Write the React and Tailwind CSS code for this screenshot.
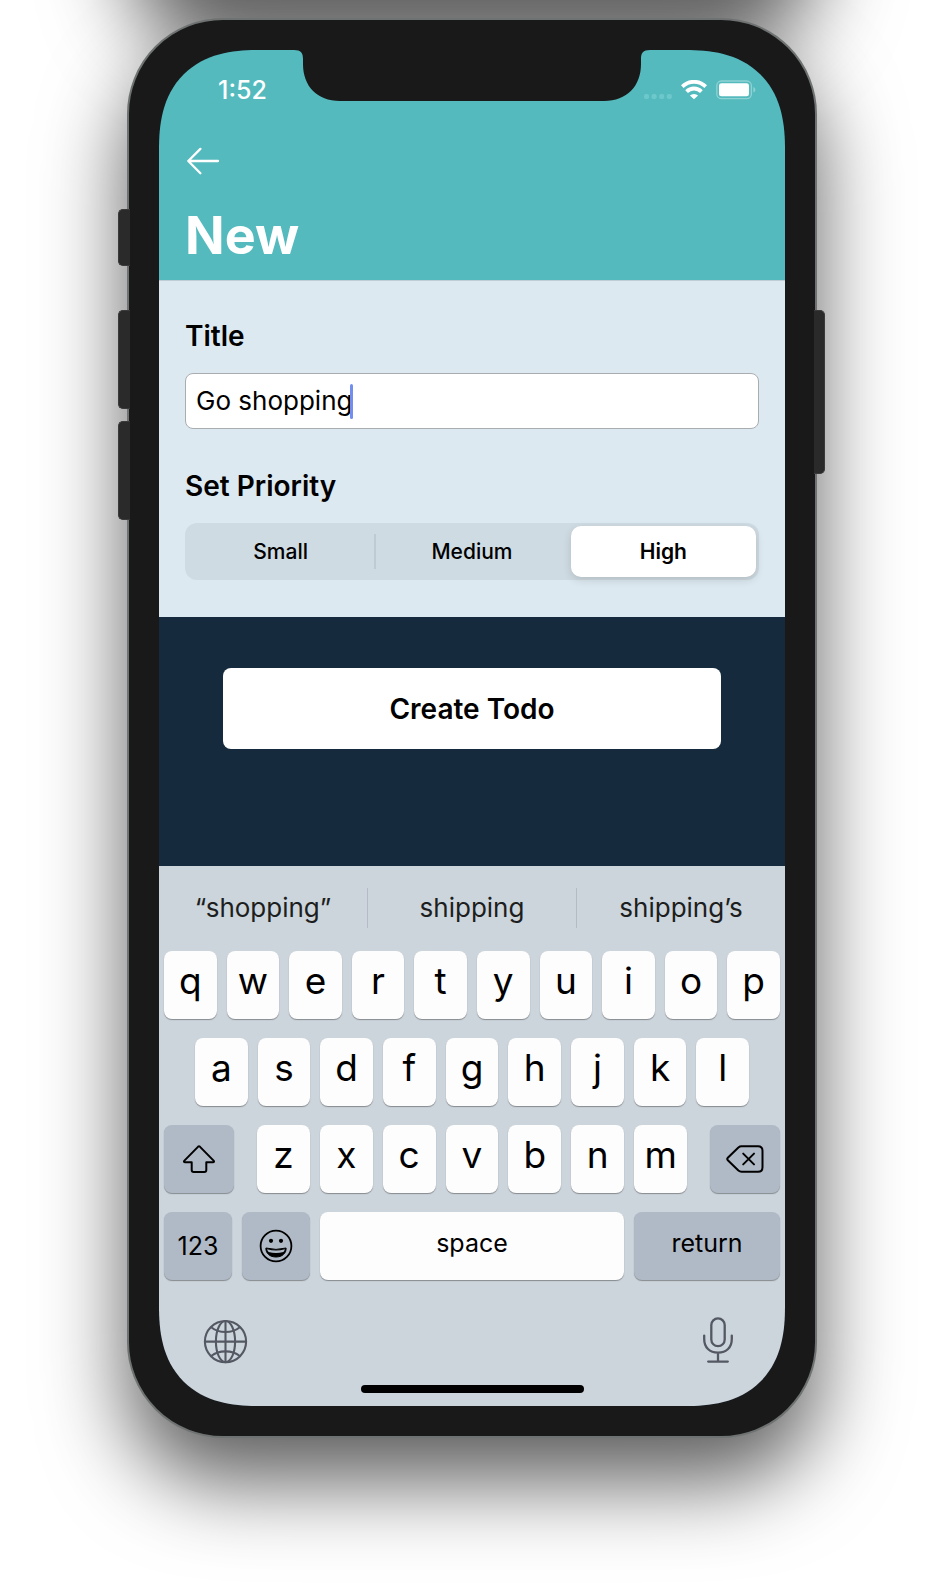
import React, { useState } from "react";

function StatusBar() {
  return (
    <div className="flex h-[80px] items-center justify-between pl-[59px] pr-[29px] text-white">
      <time className="text-[25px] leading-[30px] font-medium">1:52</time>
      <div className="flex items-center gap-[9px]">
        <svg width="28" height="20" viewBox="0 0 28 20" fill="#6cc8ca" aria-hidden="true">
          <rect x="0" y="14" width="5" height="5" rx="1.8" />
          <rect x="7.6" y="14" width="5" height="5" rx="1.8" />
          <rect x="15.2" y="14" width="5" height="5" rx="1.8" />
          <rect x="22.8" y="14" width="5" height="5" rx="1.8" />
        </svg>
        <svg width="26" height="20" viewBox="0 0 26 20" aria-label="Wi-Fi">
          <g fill="none" stroke="#fff" strokeWidth="3.8">
            <path d="M1.3 6.6 A16.6 16.6 0 0 1 24.7 6.6" />
            <path d="M5.6 11.6 A10.4 10.4 0 0 1 20.4 11.6" />
          </g>
          <path d="M13 19.3 L8.9 15.6 A5.8 5.8 0 0 1 17.1 15.6 Z" fill="#fff" />
        </svg>
        <svg width="40" height="20" viewBox="0 0 40 20" aria-label="Battery full">
          <rect x="0.8" y="1" width="34.6" height="17.6" rx="4.6" fill="none" stroke="#8fd2d4" strokeWidth="1.3" />
          <rect x="3" y="3.3" width="30" height="13" rx="2.4" fill="#fff" />
          <path d="M37.4 7 C40 8.2 40 11.4 37.4 12.6 Z" fill="#8fd2d4" />
        </svg>
      </div>
    </div>
  );
}

function Segment({ label, value, onChange, divider }) {
  const checked = value === label;
  return (
    <div className="relative flex h-[57px] items-center p-[3px]">
      <label
        className={
          checked
            ? "flex h-[51px] flex-1 cursor-pointer items-center justify-center rounded-[10px] bg-white text-[21px] leading-[26px] font-semibold shadow-[0_3px_8px_rgba(0,0,0,0.14)]"
            : "flex h-[51px] flex-1 cursor-pointer items-center justify-center rounded-[10px] text-[21px] leading-[26px] font-[450]"
        }
      >
        <input
          type="radio"
          name="priority"
          value={label}
          checked={checked}
          onChange={() => onChange(label)}
          className="sr-only"
        />
        {label}
      </label>
      {divider && <span className="absolute right-0 top-[11px] h-[35px] w-[2px] bg-[#bfcbd2]" />}
    </div>
  );
}

function LetterKey({ children }) {
  return (
    <button
      type="button"
      className="flex h-[68px] min-w-0 flex-1 items-center justify-center rounded-[8px] bg-[#fdfdfd] pb-[8px] text-[37px] leading-[46px] font-normal shadow-[0_1px_1px_#878b8f]"
    >
      {children}
    </button>
  );
}

const GREY_KEY =
  "flex h-[68px] items-center justify-center rounded-[8px] bg-[#b0bac7] text-[25px] leading-[30px] shadow-[0_1px_1px_#878b8f]";

function Keyboard() {
  return (
    <section aria-label="Keyboard" className="flex flex-col bg-[#ccd4dc] text-black">
      <div className="flex h-[85px] items-center pb-[2px] text-[26px] leading-[32px] text-[#1c1e20]">
        <button type="button" className="h-[40px] flex-1">“shopping”</button>
        <span className="h-[40px] w-px bg-[#b4bbc4]" />
        <button type="button" className="h-[40px] flex-1">shipping</button>
        <span className="h-[40px] w-px bg-[#b4bbc4]" />
        <button type="button" className="h-[40px] flex-1">shipping’s</button>
      </div>
      <div className="flex flex-col gap-[19px] px-[5px]">
        <div className="flex gap-[10px]">
          {"qwertyuiop".split("").map((k) => (
            <LetterKey key={k}>{k}</LetterKey>
          ))}
        </div>
        <div className="flex gap-[10px] px-[31px]">
          {"asdfghjkl".split("").map((k) => (
            <LetterKey key={k}>{k}</LetterKey>
          ))}
        </div>
        <div className="flex gap-[23px]">
          <button type="button" aria-label="Shift" className={GREY_KEY + " w-[70px]"}>
            <svg width="32" height="28" viewBox="0 0 32 28" fill="none" stroke="#000" strokeWidth="2" strokeLinejoin="round">
              <path d="M15.2 1.6 Q16 0.9 16.8 1.6 L30.6 15.6 Q31.7 17 29.8 17.2 H23.3 V25 Q23.3 27 21.3 27 H10.7 Q8.7 27 8.7 25 V17.2 H2.2 Q0.3 17 1.4 15.6 Z" />
            </svg>
          </button>
          <div className="flex flex-1 gap-[10px]">
            {"zxcvbnm".split("").map((k) => (
              <LetterKey key={k}>{k}</LetterKey>
            ))}
          </div>
          <button type="button" aria-label="Delete" className={GREY_KEY + " w-[70px]"}>
            <svg width="38" height="28" viewBox="0 0 38 28" fill="none" stroke="#000" strokeWidth="2" strokeLinejoin="round" strokeLinecap="round">
              <path d="M15.5 1.3 H32 Q36.5 1.3 36.5 5.8 V22.2 Q36.5 26.7 32 26.7 H15.5 Q13.8 26.7 12.4 25.5 L1.8 15.2 Q0.6 14 1.8 12.8 L12.4 2.5 Q13.8 1.3 15.5 1.3 Z" />
              <path d="M17.2 8.6 L28 19.4 M28 8.6 L17.2 19.4" />
            </svg>
          </button>
        </div>
        <div className="flex gap-[10px]">
          <button type="button" className={GREY_KEY + " w-[68px]"}>123</button>
          <button type="button" aria-label="Emoji" className={GREY_KEY + " w-[68px]"}>
            <svg width="34" height="34" viewBox="0 0 34 34">
              <circle cx="17" cy="17" r="15.4" fill="none" stroke="#000" strokeWidth="1.8" />
              <circle cx="12" cy="11.8" r="2.1" />
              <circle cx="22" cy="11.8" r="2.1" />
              <path
                d="M6.9 19 Q17 21.8 27.1 19 C27.4 24.6 22.8 28 17 28 C11.2 28 6.6 24.6 6.9 19 Z"
                stroke="#000"
                strokeWidth="1"
                strokeLinejoin="round"
              />
              <path d="M8.1 20.2 Q17 22.6 25.9 20.2 Q25.5 22 24.4 22.9 Q17 25.2 9.6 22.9 Q8.5 22 8.1 20.2 Z" fill="#b0bac7" />
            </svg>
          </button>
          <button
            type="button"
            className="flex h-[68px] flex-1 items-center justify-center rounded-[8px] bg-[#fdfdfd] pb-[6px] text-[25px] leading-[30px] shadow-[0_1px_1px_#878b8f]"
          >
            space
          </button>
          <button type="button" className={GREY_KEY + " w-[146px] pb-[6px]"}>return</button>
        </div>
      </div>
      <div className="flex items-center justify-between px-[44px] pt-[36px]">
        <button type="button" aria-label="Next keyboard">
          <svg className="block" width="45" height="48" viewBox="0 0 45 48" fill="none" stroke="#545862" strokeWidth="2.1">
            <circle cx="22.5" cy="25.6" r="20.6" />
            <ellipse cx="22.5" cy="25.6" rx="9.6" ry="20.6" />
            <path d="M22.5 5 V46.2 M1.9 25.6 H43.1" />
            <path d="M8.2 11.2 Q14 16 22.5 16 T36.8 11.2 M8.2 40 Q14 35.4 22.5 35.4 T36.8 40" />
          </svg>
        </button>
        <button type="button" aria-label="Dictate">
          <svg className="block" width="46" height="48" viewBox="0 0 46 48" fill="none" stroke="#545862" strokeWidth="2.3" strokeLinecap="round">
            <rect x="16.3" y="2.4" width="13.4" height="27.8" rx="6.7" />
            <path d="M9.2 19.6 V23 C9.2 31.6 14.6 36.6 23 36.6 C31.4 36.6 36.8 31.6 36.8 23 V19.6 M23 36.6 V45.4 M13.2 45.6 H32.8" />
          </svg>
        </button>
      </div>
      <div className="flex h-[42px] items-center justify-center pt-[8px]">
        <span className="h-[8px] w-[223px] rounded-full bg-black" />
      </div>
    </section>
  );
}

export default function App() {
  const [title, setTitle] = useState("Go shopping");
  const [priority, setPriority] = useState("High");

  return (
    <div className="relative flex min-h-screen flex-col items-center overflow-hidden bg-white px-[12px] pt-[18px] pb-[149px] font-[Inter,sans-serif] text-black">
      <div
        aria-hidden="true"
        className="absolute -top-[400px] h-[400px] w-full max-w-[690px] rounded-[96px] shadow-[0_50px_84px_rgba(0,0,0,0.63)]"
      />
      <div className="relative w-full max-w-[690px] rounded-[96px] border-2 border-[#6f7272] bg-[#191919] p-[30px] shadow-[0_44px_84px_rgba(0,0,0,0.63)]">
        <span className="absolute -left-[11px] top-[189px] h-[57px] w-[12px] rounded-l-[5px] border border-r-0 border-[#3a3a3a] bg-[#2a2a2a]" />
        <span className="absolute -left-[11px] top-[290px] h-[99px] w-[12px] rounded-l-[5px] border border-r-0 border-[#3a3a3a] bg-[#2a2a2a]" />
        <span className="absolute -left-[11px] top-[401px] h-[99px] w-[12px] rounded-l-[5px] border border-r-0 border-[#3a3a3a] bg-[#2a2a2a]" />
        <span className="absolute -right-[10px] top-[290px] h-[164px] w-[11px] rounded-r-[5px] border border-l-0 border-[#3a3a3a] bg-[#2a2a2a]" />

        <main className="relative flex flex-col overflow-hidden rounded-[84px] bg-[#152b3d] supports-[corner-shape:squircle]:rounded-[100px] supports-[corner-shape:squircle]:[corner-shape:superellipse(1.3)]">
          <svg
            className="absolute left-1/2 top-0 -translate-x-1/2"
            width="356"
            height="51"
            viewBox="0 0 356 51"
            fill="#191919"
            aria-hidden="true"
          >
            <path d="M0 0 C7 0 9 3 9 9 V14 C9 36 23 51 46 51 H310 C333 51 347 36 347 14 V9 C347 3 349 0 356 0 Z" />
          </svg>

          <header className="flex h-[230px] flex-col bg-[#55babd]">
            <StatusBar />
            <div className="px-[26px] pt-[17px]">
              <button type="button" aria-label="Back" className="block">
                <svg className="block" width="36" height="28" viewBox="0 0 36 28" fill="none" stroke="#fff" strokeWidth="2.3" strokeLinecap="round" strokeLinejoin="round">
                  <path d="M15.4 1.9 L3.3 14 L15.4 26.2 M3.3 14 H33" />
                </svg>
              </button>
            </div>
            <h1 className="px-[26px] pt-[29px] text-[52px] leading-[64px] font-bold text-white">New</h1>
          </header>

          <form
            onSubmit={(e) => e.preventDefault()}
            className="flex flex-col"
          >
            <div className="flex flex-col border-t border-[#bfcdd6] bg-[#dde9f1] px-[26px] pt-[38px] pb-[37px]">
              <label htmlFor="title" className="text-[28px] leading-[34px] font-semibold">
                Title
              </label>
              <div className="mt-[20px] flex h-[56px] items-center rounded-[8px] border border-[#a9adb0] bg-white px-[10px]">
                <input
                  id="title"
                  type="text"
                  value={title}
                  onChange={(e) => setTitle(e.target.value)}
                  className="field-sizing-content max-w-full min-w-0 bg-transparent text-[26px] leading-[34px] caret-transparent outline-none"
                />
                <span className="-ml-[2px] h-[35px] w-[3px] shrink-0 rounded-full bg-[#718ef0]" />
              </div>
              <fieldset className="mt-[40px]">
                <legend className="text-[28px] leading-[34px] font-semibold">Set Priority</legend>
                <div className="mt-[20px] grid grid-cols-3 rounded-[12px] bg-[#cfdbe2]">
                  <Segment label="Small" value={priority} onChange={setPriority} divider />
                  <Segment label="Medium" value={priority} onChange={setPriority} />
                  <Segment label="High" value={priority} onChange={setPriority} />
                </div>
              </fieldset>
            </div>
            <div className="flex h-[249px] flex-col bg-[#152b3d] px-[64px] pt-[51px]">
              <button type="submit" className="h-[81px] rounded-[8px] bg-white text-[28px] leading-[34px] font-semibold">
                Create Todo
              </button>
            </div>
          </form>

          <Keyboard />
        </main>
      </div>
    </div>
  );
}
